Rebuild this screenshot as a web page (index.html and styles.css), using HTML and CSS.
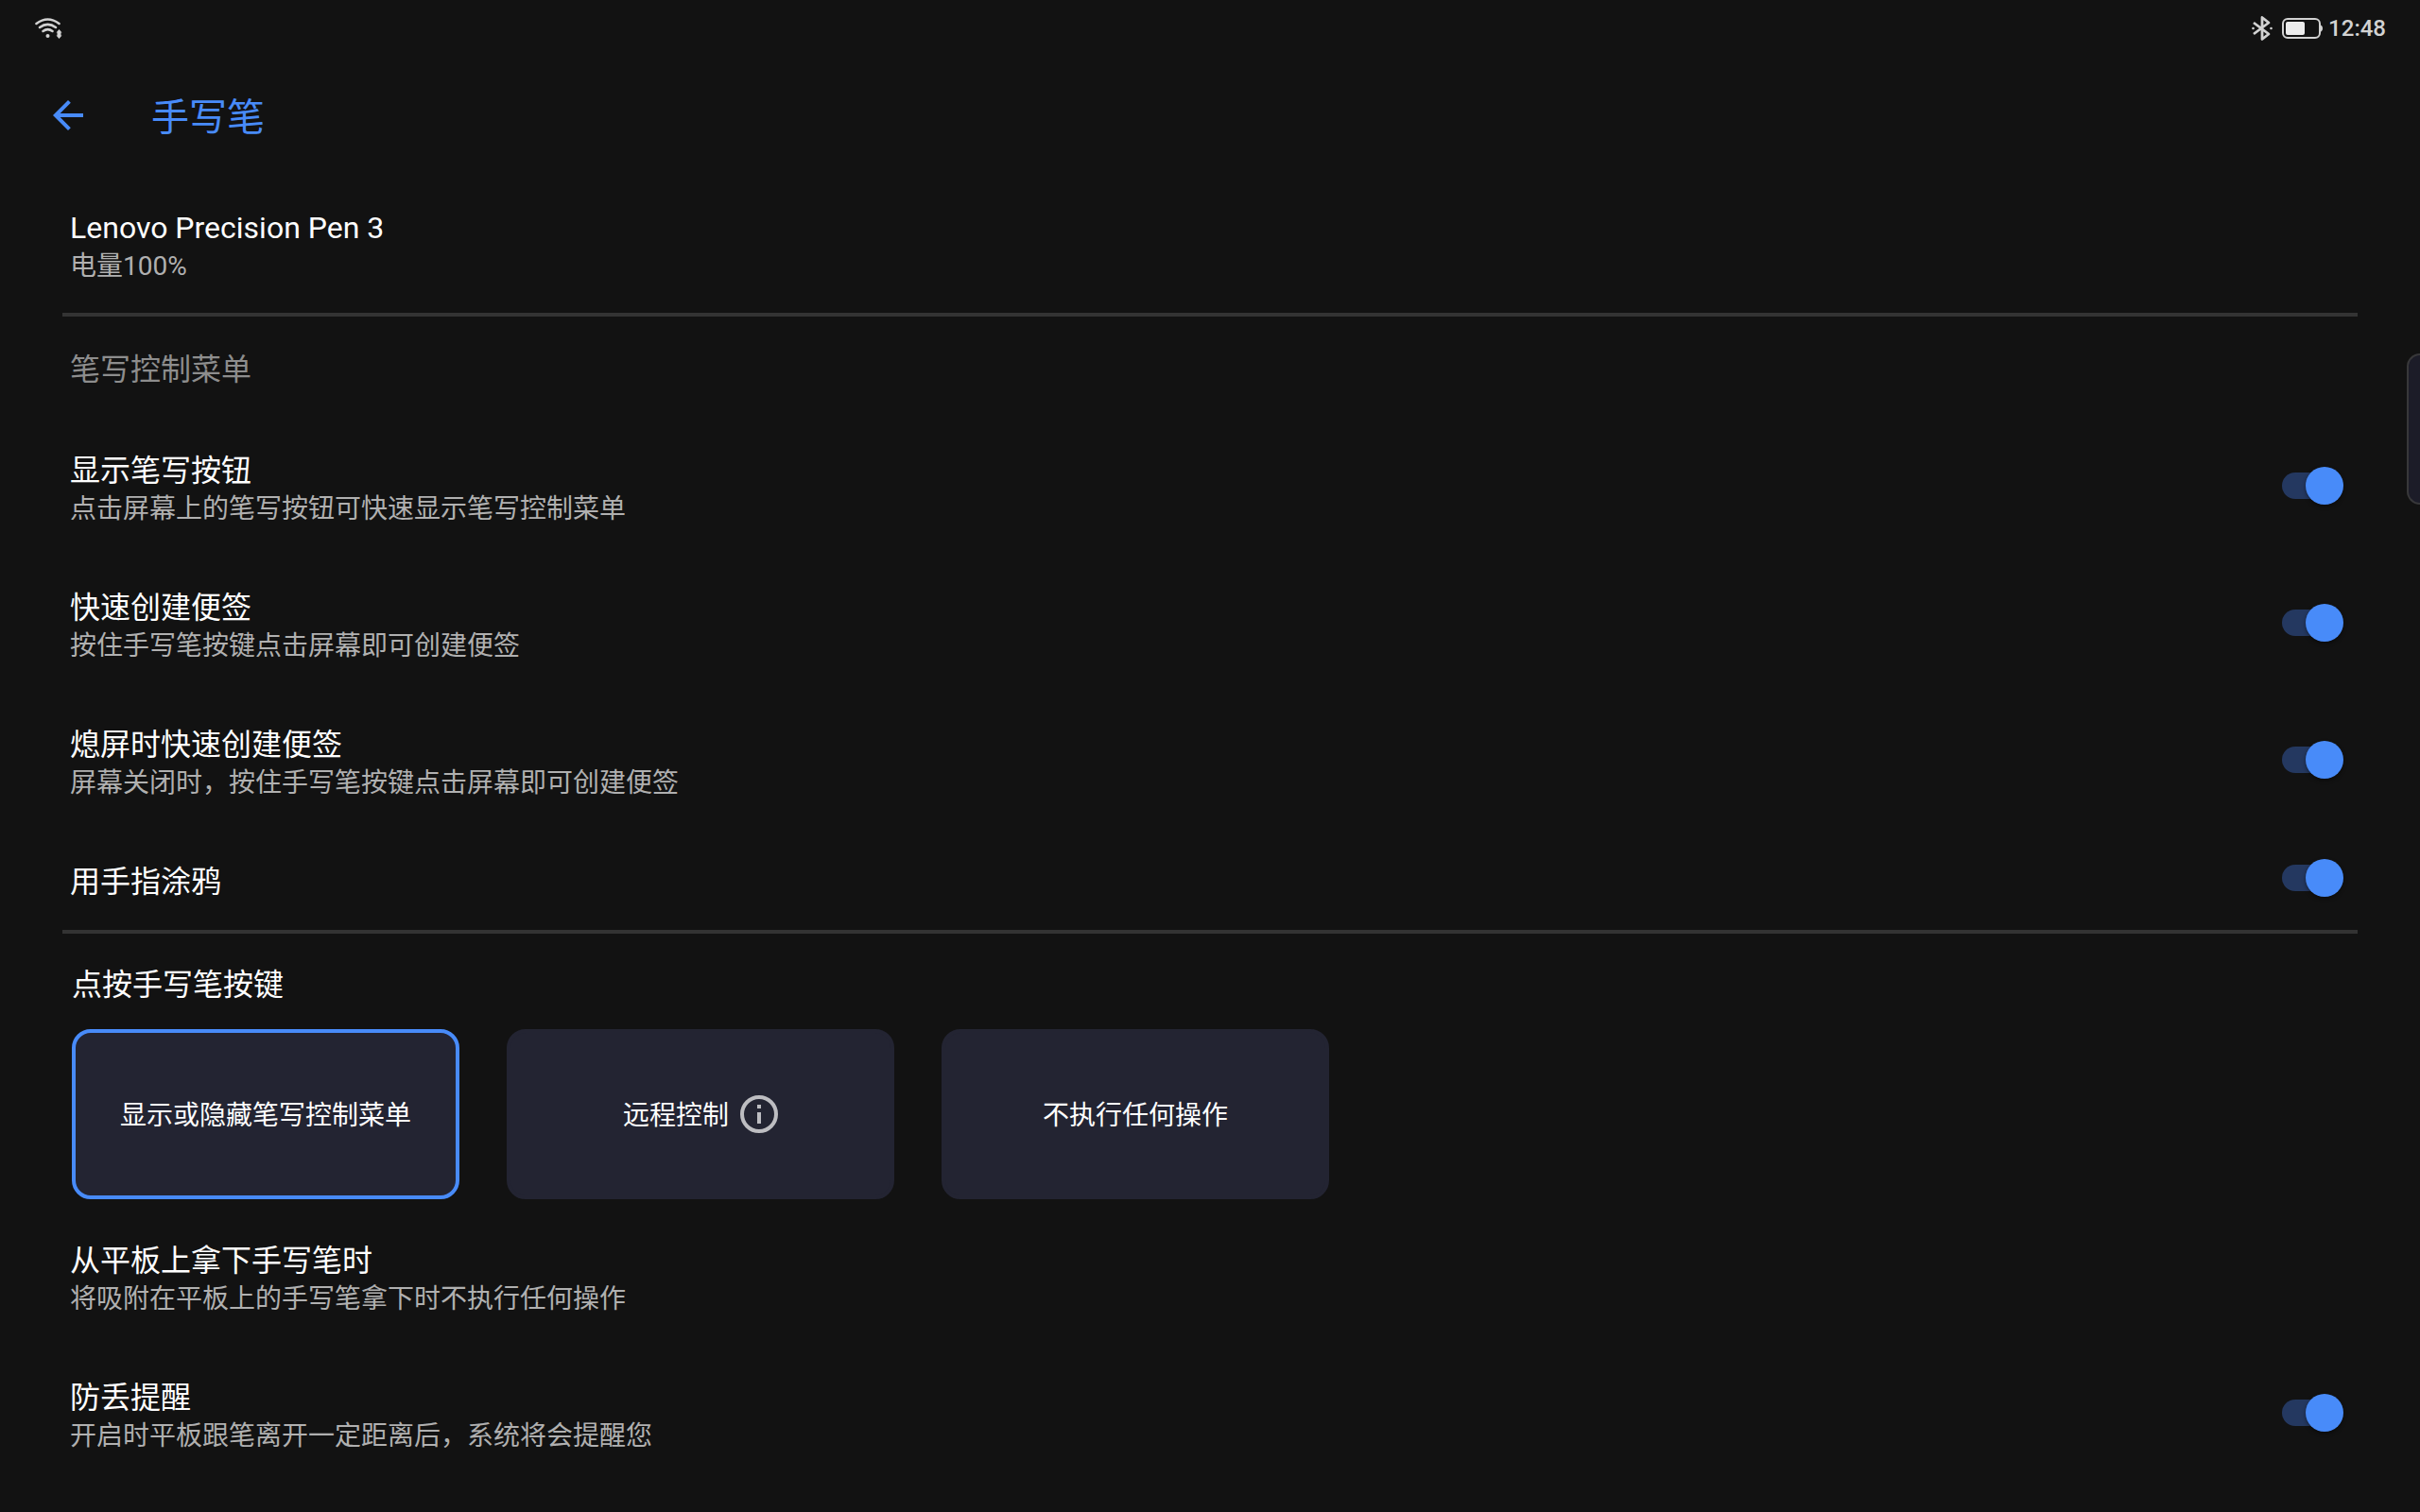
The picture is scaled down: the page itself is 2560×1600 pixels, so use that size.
FILE: index.html
```html
<!DOCTYPE html>
<html lang="zh-CN">
<head>
<meta charset="utf-8">
<meta name="viewport" content="width=device-width, initial-scale=1">
<title>手写笔</title>
<link rel="stylesheet" href="styles.css">
</head>
<body>
<div class="status-bar">
  <svg class="icon-wifi" viewBox="0 0 30 24" aria-hidden="true">
    <g fill="none" stroke="currentColor" stroke-width="2.6" stroke-linecap="round">
      <path d="M2.500 7Q14.500 -2 26.500 7"/>
      <path d="M6 11Q14.500 4.600 23 11"/>
      <path d="M9.500 15Q14.500 11.400 19.500 15"/>
    </g>
    <circle cx="14.500" cy="20" r="2"/>
    <path d="M26.500 13l3 3.500h-1v3h1l-3 3.500-3-3.500h1v-3h-1z"/>
  </svg>
  <div class="status-right">
    <svg class="icon-bluetooth" viewBox="0 0 26 28" aria-hidden="true">
      <path d="M3 8l16 12-7 5.500V2.500L19 8 3 20" fill="none" stroke="currentColor" stroke-width="2.8" stroke-linejoin="round"/>
      <circle cx="2.500" cy="14" r="1.300"/><circle cx="21.500" cy="14" r="1.300"/>
    </svg>
    <svg class="icon-battery" viewBox="0 0 44 24" aria-hidden="true">
      <rect x="2" y="2" width="39" height="20" rx="5" fill="none" stroke="currentColor" stroke-width="2"/>
      <path d="M41 8q3 1 3 4t-3 4z"/>
      <rect x="5" y="5" width="20" height="14" rx="2" fill="#ececec"/>
    </svg>
    <time class="clock">12:48</time>
  </div>
</div>

<header class="app-bar">
  <button class="back" type="button" aria-label="返回">
    <svg viewBox="0 0 24 24" aria-hidden="true"><path d="M20 11H7.830l5.590-5.590L12 4l-8 8 8 8 1.410-1.410L7.830 13H20v-2z"/></svg>
  </button>
  <h1 class="page-title">手写笔</h1>
</header>

<main class="settings">
  <section class="device">
    <h2 class="item-title">Lenovo Precision Pen 3</h2>
    <p class="item-note">电量100%</p>
  </section>

  <hr class="divider">

  <section class="menu-section">
    <h2 class="section-label">笔写控制菜单</h2>
    <div class="rows">
      <label class="row">
        <span class="row-text">
          <span class="item-title">显示笔写按钮</span>
          <span class="item-note">点击屏幕上的笔写按钮可快速显示笔写控制菜单</span>
        </span>
        <input class="switch" type="checkbox" role="switch" checked>
      </label>
      <label class="row">
        <span class="row-text">
          <span class="item-title">快速创建便签</span>
          <span class="item-note">按住手写笔按键点击屏幕即可创建便签</span>
        </span>
        <input class="switch" type="checkbox" role="switch" checked>
      </label>
      <label class="row">
        <span class="row-text">
          <span class="item-title">熄屏时快速创建便签</span>
          <span class="item-note">屏幕关闭时，按住手写笔按键点击屏幕即可创建便签</span>
        </span>
        <input class="switch" type="checkbox" role="switch" checked>
      </label>
      <label class="row">
        <span class="row-text">
          <span class="item-title">用手指涂鸦</span>
        </span>
        <input class="switch" type="checkbox" role="switch" checked>
      </label>
    </div>
  </section>

  <hr class="divider">

  <fieldset class="pen-button">
    <legend class="item-title">点按手写笔按键</legend>
    <div class="cards">
      <div class="card">
        <input class="card-radio" type="radio" name="pen-button" id="action-menu" checked>
        <label class="card-label" for="action-menu">显示或隐藏笔写控制菜单</label>
      </div>
      <div class="card">
        <input class="card-radio" type="radio" name="pen-button" id="action-remote">
        <label class="card-label" for="action-remote">远程控制</label>
        <button class="info" type="button" aria-label="远程控制说明">
          <svg viewBox="0 0 40 40" aria-hidden="true">
            <circle cx="20" cy="20" r="18" fill="none" stroke="currentColor" stroke-width="4"/>
            <path d="M18 10h4v4h-4zM18 18h4v12h-4z"/>
          </svg>
        </button>
      </div>
      <div class="card">
        <input class="card-radio" type="radio" name="pen-button" id="action-none">
        <label class="card-label" for="action-none">不执行任何操作</label>
      </div>
    </div>
  </fieldset>

  <section class="rows">
    <div class="row">
      <span class="row-text">
        <span class="item-title">从平板上拿下手写笔时</span>
        <span class="item-note">将吸附在平板上的手写笔拿下时不执行任何操作</span>
      </span>
    </div>
    <label class="row">
      <span class="row-text">
        <span class="item-title">防丢提醒</span>
        <span class="item-note">开启时平板跟笔离开一定距离后，系统将会提醒您</span>
      </span>
      <input class="switch" type="checkbox" role="switch" checked>
    </label>
  </section>
</main>

<aside class="edge-handle" aria-label="侧边栏"></aside>
</body>
</html>
```

FILE: styles.css
```css
:root {
  --accent: #488bf9;
  --bg: #121212;
  --card: #232432;
  --line: #333333;
}

* {
  box-sizing: border-box;
}

body {
  margin: 0;
  min-height: 100vh;
  overflow-x: hidden;
  background: var(--bg);
  color: #ffffff;
  font-family: Roboto, "Noto Sans CJK SC", sans-serif;
}

h1, h2, p {
  margin: 0;
  font-weight: 400;
}

svg {
  display: block;
  fill: currentColor;
}

button {
  padding: 0;
  border: 0;
  background: none;
  color: inherit;
}

/* Status bar */
.status-bar {
  display: flex;
  align-items: center;
  justify-content: space-between;
  height: 60px;
  padding: 0 36px;
  color: #d2d2d2;
}

.status-right {
  display: flex;
  align-items: center;
  gap: 6px;
}

.icon-wifi {
  width: 30px;
  height: 24px;
}

.icon-bluetooth {
  width: 26px;
  height: 28px;
}

.icon-battery {
  width: 44px;
  height: 24px;
}

.clock {
  font-size: 24px;
  font-weight: 500;
  line-height: 28px;
}

/* App bar */
.app-bar {
  display: flex;
  align-items: center;
  gap: 64px;
  height: 124px;
  padding: 0 48px;
  color: var(--accent);
}

.back {
  width: 48px;
  height: 48px;
}

.page-title {
  padding-top: 6px;
  font-size: 40px;
  line-height: 56px;
}

/* Text */
.item-title {
  display: block;
  font-size: 32px;
  line-height: 42px;
}

.item-note {
  display: block;
  color: #b0b0b0;
  font-size: 28px;
  line-height: 40px;
}

.divider {
  height: 4px;
  margin: 0 66px;
  border: 0;
  background: var(--line);
}

.device {
  padding: 36px 74px 29px;
}

.menu-section {
  padding: 35px 0 30px;
}

.section-label {
  margin-bottom: 57px;
  padding: 0 74px;
  color: #8d8d8d;
  font-size: 32px;
  line-height: 42px;
}

/* Setting rows */
.rows {
  display: flex;
  flex-direction: column;
  gap: 55px;
}

.row {
  display: flex;
  align-items: center;
  justify-content: space-between;
  padding: 0 86px 0 74px;
}

.row-text {
  padding-top: 8px;
}

.switch {
  display: flex;
  align-items: center;
  justify-content: flex-start;
  flex-shrink: 0;
  width: 60px;
  height: 28px;
  margin: 0;
  border-radius: 14px;
  appearance: none;
  background: #3a3a3a;
}

.switch::before {
  content: "";
  flex-shrink: 0;
  width: 40px;
  height: 40px;
  margin: 0 -5px;
  border-radius: 50%;
  background: #bdbdbd;
  box-shadow: 0 2px 4px rgba(0, 0, 0, 0.4);
}

.switch:checked {
  justify-content: flex-end;
  background: #243860;
}

.switch:checked::before {
  background: var(--accent);
}

/* Pen button actions */
.pen-button {
  margin: 0;
  padding: 33px 76px 36px;
  border: 0;
}

.pen-button legend {
  float: left;
  width: 100%;
  margin-bottom: 26px;
  padding: 0;
}

.cards {
  display: flex;
  flex-wrap: wrap;
  gap: 50px;
  clear: both;
}

.card {
  display: flex;
  align-items: center;
  justify-content: center;
  width: 410px;
  height: 180px;
  border: 4px solid var(--card);
  border-radius: 20px;
  background: var(--card);
}

.card:has(.card-radio:checked) {
  border-color: var(--accent);
}

.card-radio {
  width: 0;
  height: 0;
  margin: 0;
  appearance: none;
}

.card-label {
  padding-top: 4px;
  font-size: 28px;
  line-height: 40px;
}

.info {
  width: 40px;
  height: 40px;
  margin-left: 12px;
  color: #bdbdc1;
}

/* Sidebar handle peeking in from the screen edge */
.edge-handle {
  position: absolute;
  top: 374px;
  right: 0;
  width: 14px;
  height: 160px;
  border: 2px solid #38383a;
  border-right: 0;
  border-radius: 14px 0 0 14px;
  background: #1c1c28;
}
```
